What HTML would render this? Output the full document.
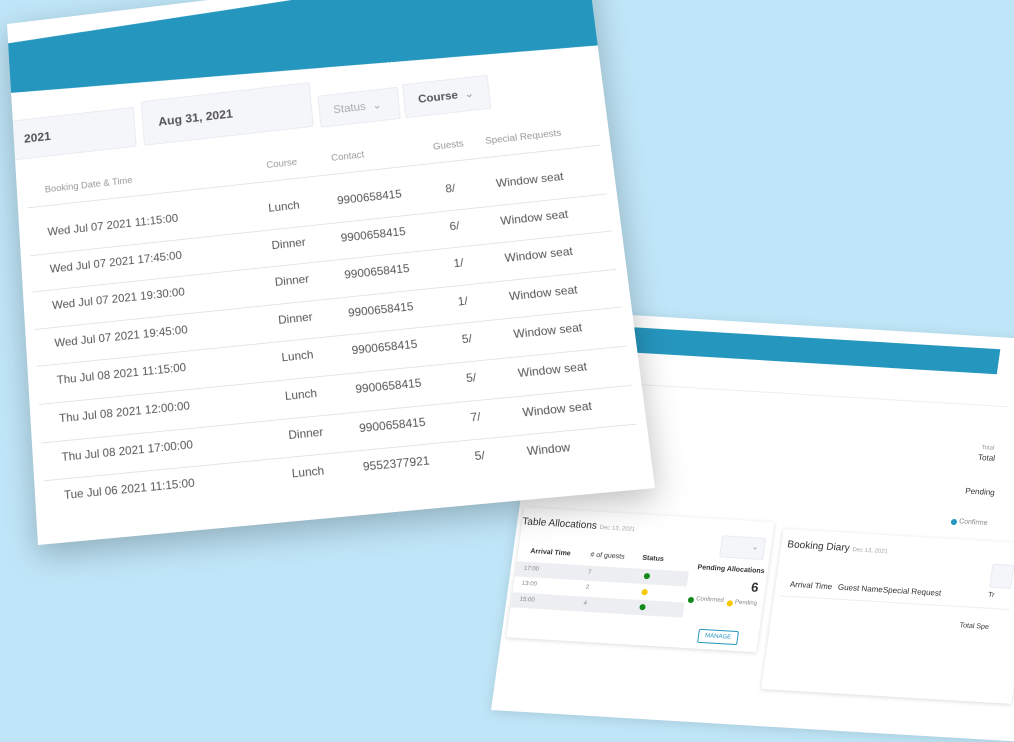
<!DOCTYPE html>
<html><head><meta charset="utf-8">
<style>
html,body{margin:0;padding:0;}
body{width:1014px;height:653px;overflow:hidden;background:#bfe6f8;position:relative;font-family:"Liberation Sans",sans-serif;}
.card2{position:absolute;left:0;top:0;width:540px;height:400px;background:#fff;transform-origin:0 0;
 transform:matrix(1,0.06,-0.14,1,547,310);box-shadow:0 2px 12px rgba(0,0,0,0.12);overflow:hidden;}
.card2 .hd{position:absolute;left:0;top:12px;width:455px;height:25px;background:#2596be;}
.card2 .ln{position:absolute;left:0;top:68px;width:470px;height:1px;background:#eee;}
.panel{position:absolute;background:#fff;box-shadow:0 1px 4px rgba(0,0,0,0.15);}
.t{position:absolute;white-space:nowrap;color:#333;}
.main{position:absolute;left:0;top:0;width:620px;height:560px;background:#fff;transform-origin:0 0;overflow:hidden;
 transform:matrix3d(0.90669,-0.10920,0,-0.000046382,0.051396,0.87355,0,-0.000104238,0,0,1,0,7,24,0,1);
 box-shadow:0 10px 30px rgba(0,0,0,0.25);}
.main .hd{position:absolute;left:0;top:0;width:620px;height:102px;background:#2596be;clip-path:polygon(0 22px,100% 0,100% 100px,0 78px);}
.box{position:absolute;background:#f4f6fa;border:1px solid #e8ebf0;border-radius:2px;}
.m{position:absolute;white-space:nowrap;color:#555;font-size:12px;}
.h{position:absolute;white-space:nowrap;color:#999;font-size:10px;}
.rl{position:absolute;left:10px;width:600px;height:1px;background:#e4e4e4;}
.dot{position:absolute;width:6px;height:6px;border-radius:50%;}
</style></head><body>

<div class="card2">
 <div class="hd"></div>
 <div class="ln"></div>
 <div class="t" style="left:450px;top:108px;font-size:6px;color:#999">Total</div>
 <div class="t" style="left:448px;top:116px;font-size:8px;">Total</div>
 <div class="t" style="left:440px;top:150px;font-size:8px;">Pending</div>
 <div class="dot" style="left:430px;top:183px;background:#2596be"></div>
 <div class="t" style="left:438px;top:182px;font-size:7px;color:#888">Confirme</div>

 <div class="panel" style="left:5px;top:197px;width:250px;height:130px;">
  <div class="t" style="left:0;top:9px;font-size:10px;">Table Allocations <span style="font-size:6px;color:#aaa">Dec 13, 2021</span></div>
  <div class="box" style="left:200px;top:16px;width:42px;height:20px;"><span style="position:absolute;left:30px;top:4px;font-size:8px;color:#999">⌄</span></div>
  <div class="t" style="left:12px;top:40px;font-size:7px;font-weight:bold">Arrival Time</div>
  <div class="t" style="left:72px;top:40px;font-size:7px;">&#35; of guests</div>
  <div class="t" style="left:124px;top:40px;font-size:7px;font-weight:bold">Status</div>
  <div style="position:absolute;left:0;top:54px;width:172px;height:15px;background:#eceef1"></div>
  <div style="position:absolute;left:0;top:85px;width:172px;height:15px;background:#eceef1"></div>
  <div class="t" style="left:8px;top:58px;font-size:6px;color:#888">17:00</div>
  <div class="t" style="left:8px;top:73px;font-size:6px;color:#888">13:00</div>
  <div class="t" style="left:8px;top:89px;font-size:6px;color:#888">15:00</div>
  <div class="t" style="left:72px;top:58px;font-size:6px;color:#888">7</div>
  <div class="t" style="left:72px;top:73px;font-size:6px;color:#888">2</div>
  <div class="t" style="left:72px;top:89px;font-size:6px;color:#888">4</div>
  <div class="dot" style="left:128px;top:58px;background:#138a1a"></div>
  <div class="dot" style="left:128px;top:74px;background:#f5c800"></div>
  <div class="dot" style="left:128px;top:89px;background:#138a1a"></div>
  <div class="t" style="left:180px;top:46px;font-size:7px;font-weight:bold">Pending Allocations</div>
  <div class="t" style="left:236px;top:58px;font-size:13px;font-weight:bold">6</div>
  <div class="dot" style="left:175px;top:79px;background:#138a1a"></div>
  <div class="t" style="left:183px;top:78px;font-size:6px;color:#888">Confirmed</div>
  <div class="dot" style="left:214px;top:80px;background:#f5c800"></div>
  <div class="t" style="left:222px;top:79px;font-size:6px;color:#888">Pending</div>
  <div style="position:absolute;left:190px;top:110px;width:38px;height:12px;border:1px solid #2596be;border-radius:2px;font-size:6px;color:#2596be;text-align:center;line-height:12px">MANAGE</div>
 </div>

 <div class="panel" style="left:265px;top:203px;width:250px;height:160px;">
  <div class="t" style="left:6px;top:10px;font-size:10px;">Booking Diary <span style="font-size:6px;color:#aaa">Dec 13, 2021</span></div>
  <div class="box" style="left:212px;top:22px;width:20px;height:22px;"></div>
  <div class="t" style="left:14px;top:50px;font-size:8px;">Arrival Time</div>
  <div class="t" style="left:62px;top:50px;font-size:8px;">Guest Name</div>
  <div class="t" style="left:107px;top:50px;font-size:8px;">Special Request</div>
  <div class="t" style="left:212px;top:50px;font-size:7px;">Tr</div>
  <div style="position:absolute;left:5px;top:66px;width:230px;height:1px;background:#eee"></div>
  <div class="t" style="left:188px;top:82px;font-size:7px;">Total Spe</div>
 </div>
</div>

<div class="main">
 <div class="hd"></div>
 <div class="box" style="left:-10px;top:109px;width:139px;height:42px;"><span style="position:absolute;left:20px;top:13px;font-size:13px;font-weight:bold;color:#555">2021</span></div>
 <div class="box" style="left:139px;top:104px;width:178px;height:47px;"><span style="position:absolute;left:16px;top:16px;font-size:13px;font-weight:bold;color:#555">Aug 31, 2021</span></div>
 <div class="box" style="left:326px;top:120px;width:82px;height:33px;"><span style="position:absolute;left:14px;top:9px;font-size:12px;color:#aaa">Status &nbsp;⌄</span></div>
 <div class="box" style="left:415px;top:118px;width:87px;height:35px;"><span style="position:absolute;left:14px;top:10px;font-size:12px;font-weight:bold;color:#555">Course &nbsp;<span style="font-weight:normal;color:#999">⌄</span></span></div>

 <div class="h" style="left:30px;top:184px">Booking Date &amp; Time</div>
 <div class="h" style="left:266px;top:184px">Course</div>
 <div class="h" style="left:334px;top:184px">Contact</div>
 <div class="h" style="left:440px;top:184px">Guests</div>
 <div class="h" style="left:494px;top:184px">Special Requests</div>
 <div class="rl" style="top:206px"></div>

 <div style="position:absolute;left:0;top:228px;width:620px;">
  <div style="position:relative;height:39.6px"><span class="m" style="left:30px;top:0">Wed Jul 07 2021 11:15:00</span><span class="m" style="left:264px;top:0">Lunch</span><span class="m" style="left:336px;top:0">9900658415</span><span class="m" style="left:448px;top:0">8/</span><span class="m" style="left:500px;top:0">Window seat</span></div>
  <div class="rl" style="position:relative;top:-10px"></div>
  <div style="position:relative;height:39.6px;margin-top:-1px"><span class="m" style="left:30px;top:0">Wed Jul 07 2021 17:45:00</span><span class="m" style="left:264px;top:0">Dinner</span><span class="m" style="left:336px;top:0">9900658415</span><span class="m" style="left:448px;top:0">6/</span><span class="m" style="left:500px;top:0">Window seat</span></div>
  <div class="rl" style="position:relative;top:-10px"></div>
  <div style="position:relative;height:39.6px;margin-top:-1px"><span class="m" style="left:30px;top:0">Wed Jul 07 2021 19:30:00</span><span class="m" style="left:264px;top:0">Dinner</span><span class="m" style="left:336px;top:0">9900658415</span><span class="m" style="left:448px;top:0">1/</span><span class="m" style="left:500px;top:0">Window seat</span></div>
  <div class="rl" style="position:relative;top:-10px"></div>
  <div style="position:relative;height:39.6px;margin-top:-1px"><span class="m" style="left:30px;top:0">Wed Jul 07 2021 19:45:00</span><span class="m" style="left:264px;top:0">Dinner</span><span class="m" style="left:336px;top:0">9900658415</span><span class="m" style="left:448px;top:0">1/</span><span class="m" style="left:500px;top:0">Window seat</span></div>
  <div class="rl" style="position:relative;top:-10px"></div>
  <div style="position:relative;height:39.6px;margin-top:-1px"><span class="m" style="left:30px;top:0">Thu Jul 08 2021 11:15:00</span><span class="m" style="left:264px;top:0">Lunch</span><span class="m" style="left:336px;top:0">9900658415</span><span class="m" style="left:448px;top:0">5/</span><span class="m" style="left:500px;top:0">Window seat</span></div>
  <div class="rl" style="position:relative;top:-10px"></div>
  <div style="position:relative;height:39.6px;margin-top:-1px"><span class="m" style="left:30px;top:0">Thu Jul 08 2021 12:00:00</span><span class="m" style="left:264px;top:0">Lunch</span><span class="m" style="left:336px;top:0">9900658415</span><span class="m" style="left:448px;top:0">5/</span><span class="m" style="left:500px;top:0">Window seat</span></div>
  <div class="rl" style="position:relative;top:-10px"></div>
  <div style="position:relative;height:39.6px;margin-top:-1px"><span class="m" style="left:30px;top:0">Thu Jul 08 2021 17:00:00</span><span class="m" style="left:264px;top:0">Dinner</span><span class="m" style="left:336px;top:0">9900658415</span><span class="m" style="left:448px;top:0">7/</span><span class="m" style="left:500px;top:0">Window seat</span></div>
  <div class="rl" style="position:relative;top:-10px"></div>
  <div style="position:relative;height:39.6px;margin-top:-1px"><span class="m" style="left:30px;top:0">Tue Jul 06 2021 11:15:00</span><span class="m" style="left:264px;top:0">Lunch</span><span class="m" style="left:336px;top:0">9552377921</span><span class="m" style="left:448px;top:0">5/</span><span class="m" style="left:500px;top:0">Window</span></div>
 </div>
</div>
</body></html>
